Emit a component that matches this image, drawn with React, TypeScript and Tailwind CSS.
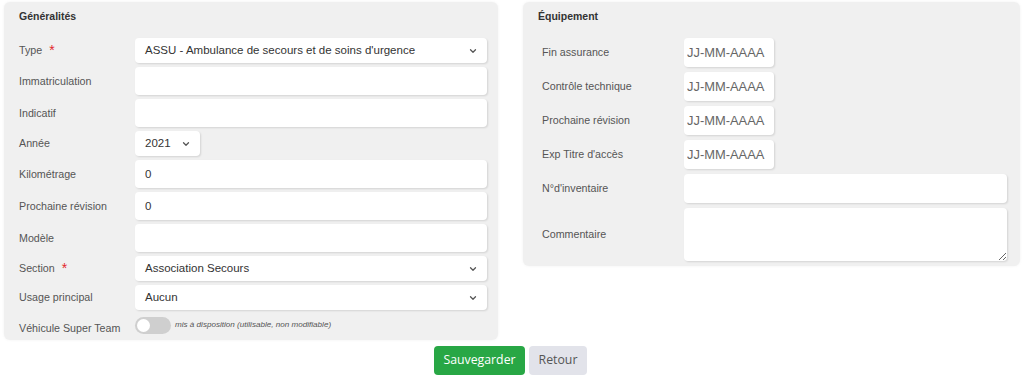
import { ChevronDown } from 'lucide-react';

const field =
  'h-full w-full rounded-[4px] bg-white px-[10px] text-[11.5px] text-[#333] shadow-[1px_1px_2px_rgba(0,0,0,0.12)] outline-none';

function Row({ label, required, h, children }: { label: string; required?: boolean; h: number; children?: React.ReactNode }) {
  return (
    <div className="flex items-center" style={{ height: h }}>
      <div className="flex w-[116px] shrink-0 items-center gap-[7px] text-[10.7px] text-[#555]">
        {label}
        {required && <span className="text-[14px] leading-none text-[#e3262d]">*</span>}
      </div>
      <div className="h-full flex-1">{children}</div>
    </div>
  );
}

function Select({ value, width }: { value: string; width?: string }) {
  return (
    <div className={`relative h-full ${width ?? 'w-full'}`}>
      <div className={`${field} flex items-center`}>{value}</div>
      <ChevronDown size={10} strokeWidth={3} className="absolute right-[9px] top-1/2 -translate-y-1/2 text-[#555]" />
    </div>
  );
}

function Input({ value }: { value?: string }) {
  return <input readOnly value={value ?? ''} className={field} />;
}

function DateRow({ label }: { label: string }) {
  return (
    <div className="flex h-[29px] items-center">
      <div className="w-[142px] shrink-0 text-[10.7px] text-[#555]">{label}</div>
      <input
        readOnly
        placeholder="JJ-MM-AAAA"
        className="h-full w-[90px] rounded-[4px] bg-white px-[3px] text-[12.9px] text-[#555] shadow-[1px_1px_2px_rgba(0,0,0,0.12)] outline-none placeholder:text-[#666]"
      />
    </div>
  );
}

export default function App() {
  return (
    <div className="min-h-[379px] bg-white font-['Liberation_Sans',Arial,sans-serif]">
      <div className="grid grid-cols-[494px_497px] items-start gap-[25px] px-[4px] pt-[2px]">
        {/* Généralités */}
        <section className="flex h-[338px] flex-col rounded-[6px] bg-[#f0f0f0] pl-[15px] pr-[11px] shadow-[0_0_3px_rgba(0,0,0,0.06)]">
          <h2 className="h-[36px] pt-[7px] text-[10.5px] font-bold text-[#333]">Généralités</h2>
          <div className="flex flex-col gap-[4px]">
            <Row label="Type" required h={25}>
              <Select value="ASSU - Ambulance de secours et de soins d'urgence" />
            </Row>
            <Row label="Immatriculation" h={28}>
              <Input />
            </Row>
            <Row label="Indicatif" h={28}>
              <Input />
            </Row>
            <Row label="Année" h={25}>
              <Select value="2021" width="w-[65px]" />
            </Row>
            <Row label="Kilométrage" h={28}>
              <Input value="0" />
            </Row>
            <Row label="Prochaine révision" h={28}>
              <Input value="0" />
            </Row>
            <Row label="Modèle" h={28}>
              <Input />
            </Row>
            <Row label="Section" required h={25}>
              <Select value="Association Secours" />
            </Row>
            <Row label="Usage principal" h={25}>
              <Select value="Aucun" />
            </Row>
            <div className="flex h-[22px] items-center">
              <div className="w-[116px] shrink-0 pt-[6px] text-[10.7px] text-[#555]">Véhicule Super Team</div>
              <div className="flex items-center gap-[4px]">
                <span className="flex h-[17px] w-[36px] items-center rounded-full bg-[#cfcfcf] px-[2px]">
                  <span className="h-[13px] w-[13px] rounded-full bg-white" />
                </span>
                <span className="text-[8.1px] italic text-[#555]">mis à disposition (utilisable, non modifiable)</span>
              </div>
            </div>
          </div>
        </section>

        {/* Équipement */}
        <section className="flex h-[264px] flex-col rounded-[6px] bg-[#f0f0f0] pl-[15px] pr-[13px] shadow-[0_0_3px_rgba(0,0,0,0.06)]">
          <h2 className="h-[36px] pt-[7px] text-[10.5px] font-bold text-[#333]">Équipement</h2>
          <div className="flex flex-col gap-[5px] pl-[4px]">
            <DateRow label="Fin assurance" />
            <DateRow label="Contrôle technique" />
            <DateRow label="Prochaine révision" />
            <DateRow label="Exp Titre d'accès" />
            <div className="flex h-[29px] items-center">
              <div className="w-[142px] shrink-0 text-[10.7px] text-[#555]">N°d'inventaire</div>
              <input readOnly className={field} />
            </div>
            <div className="flex h-[53px] items-center">
              <div className="w-[142px] shrink-0 text-[10.7px] text-[#555]">Commentaire</div>
              <textarea readOnly className="h-full w-full resize-y rounded-[4px] bg-white shadow-[1px_1px_2px_rgba(0,0,0,0.12)] outline-none" />
            </div>
          </div>
        </section>
      </div>

      <div className="mt-[6px] flex justify-center gap-[4px] pr-[3px] font-['Open_Sans',sans-serif]">
        <button className="h-[29px] w-[91px] rounded-[4px] bg-[#28a745] text-[12.3px] text-white">Sauvegarder</button>
        <button className="h-[29px] w-[58px] rounded-[4px] bg-[#e2e3ea] text-[12.3px] text-[#555]">Retour</button>
      </div>
    </div>
  );
}
